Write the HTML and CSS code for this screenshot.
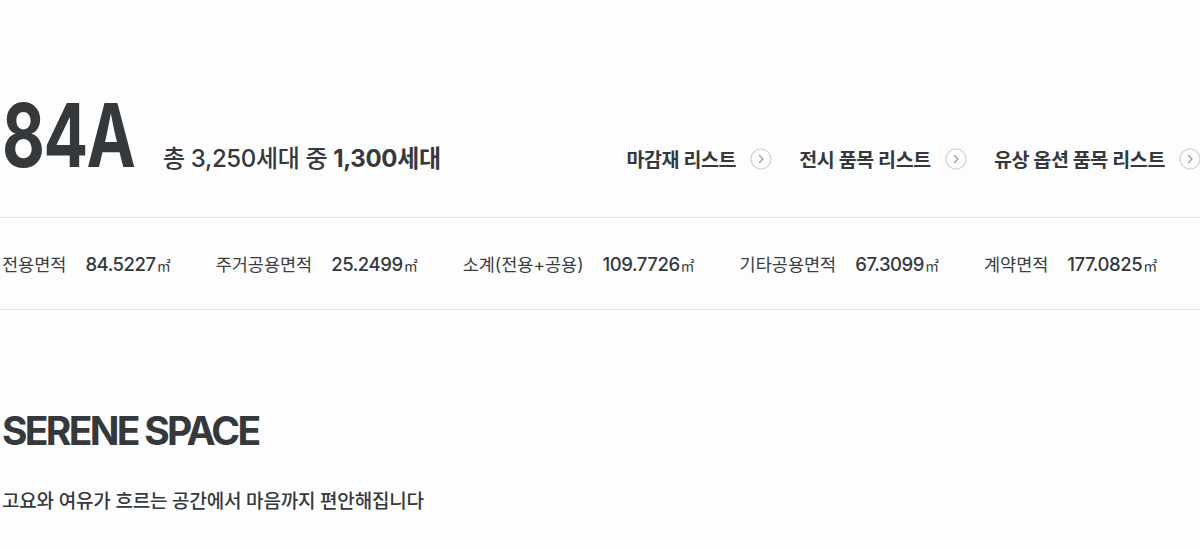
FILE: index.html
```html
<!DOCTYPE html>
<html lang="ko">
<head>
<meta charset="utf-8">
<title>84A</title>
<link rel="stylesheet" href="styles.css">
</head>
<body>
<main class="page">
  <section class="head">
    <h1 class="type"><span class="type-text">84A</span></h1>
    <p class="count">총 3,250세대 중 <strong>1,300세대</strong></p>
    <nav class="links">
      <a class="link" href="#">마감재 리스트
        <svg class="arrow" viewBox="0 0 22 22" width="22" height="22"><circle cx="11" cy="11" r="10" fill="none" stroke="#d2d2d2" stroke-width="1.2"/><path d="M9.5 7.5 L13 11 L9.5 14.5" fill="none" stroke="#9a9a9a" stroke-width="1.2" stroke-linecap="round" stroke-linejoin="round"/></svg>
      </a>
      <a class="link" href="#">전시 품목 리스트
        <svg class="arrow" viewBox="0 0 22 22" width="22" height="22"><circle cx="11" cy="11" r="10" fill="none" stroke="#d2d2d2" stroke-width="1.2"/><path d="M9.5 7.5 L13 11 L9.5 14.5" fill="none" stroke="#9a9a9a" stroke-width="1.2" stroke-linecap="round" stroke-linejoin="round"/></svg>
      </a>
      <a class="link" href="#">유상 옵션 품목 리스트
        <svg class="arrow" viewBox="0 0 22 22" width="22" height="22"><circle cx="11" cy="11" r="10" fill="none" stroke="#d2d2d2" stroke-width="1.2"/><path d="M9.5 7.5 L13 11 L9.5 14.5" fill="none" stroke="#9a9a9a" stroke-width="1.2" stroke-linecap="round" stroke-linejoin="round"/></svg>
      </a>
    </nav>
  </section>

  <section class="areas">
    <div class="area"><span class="label">전용면적</span><span class="value">84.5227<span class="unit">㎡</span></span></div>
    <div class="area"><span class="label">주거공용면적</span><span class="value">25.2499<span class="unit">㎡</span></span></div>
    <div class="area"><span class="label">소계(전용+공용)</span><span class="value">109.7726<span class="unit">㎡</span></span></div>
    <div class="area"><span class="label">기타공용면적</span><span class="value">67.3099<span class="unit">㎡</span></span></div>
    <div class="area"><span class="label">계약면적</span><span class="value">177.0825<span class="unit">㎡</span></span></div>
  </section>

  <section class="intro">
    <h2 class="intro-title">SERENE SPACE</h2>
    <p class="intro-text">고요와 여유가 흐르는 공간에서 마음까지 편안해집니다</p>
  </section>
</main>
</body>
</html>
```

FILE: styles.css
```css
* { box-sizing: border-box; }
html, body { margin: 0; padding: 0; background: #fdfdfd; }
body {
  font-family: "Inter", "Noto Sans CJK KR", sans-serif;
  color: #35393c;
  overflow: hidden;
}
.page { width: 1200px; }

.head {
  display: flex;
  align-items: baseline;
  padding: 91px 0 38px 2px;
  border-bottom: 1px solid #e6e6e6;
}
.type {
  margin: 0;
  width: 131px;
  font-size: 88px;
  line-height: 88px;
  font-weight: 700;
  letter-spacing: -2px;
  white-space: nowrap;
}
.type-text {
  display: inline-block;
  transform: scaleX(0.75);
  transform-origin: left center;
}
.count {
  margin: 0 0 0 30px;
  font-size: 24px;
  font-weight: 500;
  letter-spacing: -0.35px;
}
.count strong { font-weight: 700; }
.links {
  margin-left: auto;
  margin-right: -1px;
  display: flex;
  align-items: baseline;
  gap: 27px;
}
.link {
  display: flex;
  align-items: center;
  gap: 14px;
  color: #35393c;
  text-decoration: none;
  font-size: 19.5px;
  font-weight: 700;
  letter-spacing: -0.35px;
}
.arrow { display: block; }

.areas {
  display: flex;
  align-items: center;
  gap: 45px;
  height: 92px;
  padding-left: 2px;
  border-bottom: 1px solid #e6e6e6;
}
.area { display: flex; align-items: baseline; gap: 19px; }
.label { font-size: 17.5px; font-weight: 400; color: #3a3e41; }
.value { font-size: 18.5px; font-weight: 500; letter-spacing: -0.45px; }
.unit { font-size: 14px; font-weight: 400; margin-left: 1px; letter-spacing: 0; }

.intro { padding: 96px 0 0 2px; }
.intro-title {
  margin: 0;
  font-size: 39px;
  line-height: 50px;
  font-weight: 700;
  letter-spacing: -2.7px;
}
.intro-text {
  margin: 30px 0 0;
  font-size: 19px;
  font-weight: 500;
  letter-spacing: -0.2px;
}
```
